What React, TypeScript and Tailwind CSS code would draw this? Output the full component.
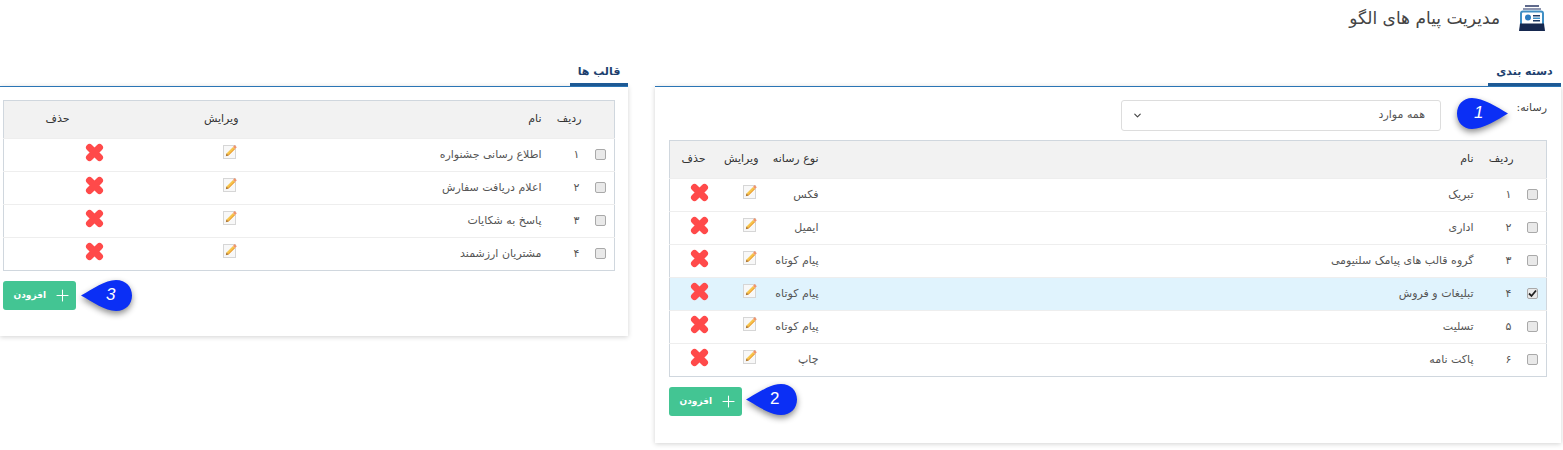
import React from "react";
import { ChevronDown, Plus } from "lucide-react";

function Check({ on }: { on?: boolean }) {
  return (
    <span className="inline-flex w-[11px] h-[11px] rounded-[2px] border border-[#a9a9a9] bg-[#e9e9e9] items-center justify-center align-middle">
      {on && (
        <svg width="9" height="9" viewBox="0 0 9 9">
          <path d="M1 4.5 L3.5 7 L8 1.5" fill="none" stroke="#222" strokeWidth="1.8" />
        </svg>
      )}
    </span>
  );
}

function Pencil() {
  return (
    <svg width="14" height="15" viewBox="0 0 14 15" className="inline-block align-middle -translate-y-[3px]">
      <rect x="0.5" y="1.5" width="12" height="13" fill="#f8f8f8" stroke="#d6d6d6" />
      <path d="M3.5 9.5 L10 3 L12 5 L5.5 11.5 L3 12 Z" fill="#f7c54a" />
      <path d="M5 11 L11.5 4.5 L12 5 L5.5 11.5 Z" fill="#e8912f" />
      <path d="M10 3 L11.5 1 L13.8 3.2 L12 5 Z" fill="#f0956b" />
      <path d="M3.5 9.5 L5.5 11.5 L2.8 12.2 Z" fill="#a8743c" />
    </svg>
  );
}

function Cross() {
  return (
    <svg width="19" height="19" viewBox="0 0 19 19" className="inline-block align-middle -translate-y-[3px]">
      <path d="M4.5 4.5 L14.5 14.5 M14.5 4.5 L4.5 14.5" stroke="#ff4a4a" strokeWidth="7" strokeLinecap="round" />
    </svg>
  );
}

function Drop({ n, dir, className, digit }: { n: string; dir: "left" | "right"; className: string; digit: string }) {
  return (
    <div className={`absolute w-[54px] h-[36px] ${className}`}>
      <svg width="54" height="36" viewBox="0 0 54 36" className="drop-shadow-[0_3px_3px_rgba(0,0,0,0.45)]">
        {dir === "right" ? (
          <path d="M16 1 C27 1 41 10 52 16.5 C41 23 27 32 16 32 C7 32 1 25 1 16.5 C1 8 7 1 16 1 Z" fill="#0b2ff5" />
        ) : (
          <path d="M36 1 C25 1 13 10 1 16.5 C13 23 25 32 36 32 C46 32 52 25 52 16.5 C52 8 46 1 36 1 Z" fill="#0b2ff5" />
        )}
      </svg>
      <span className={`absolute top-[5px] text-white text-[17px] font-['Liberation_Sans',sans-serif] leading-[22px] ${digit}`}>
        {n}
      </span>
    </div>
  );
}

function AddButton() {
  return (
    <button className="w-[73px] h-[29px] bg-[#43c593] rounded-[3px] text-white text-[9px] font-bold flex items-center justify-start pr-[4px] gap-[7px]">
      <Plus size={19} strokeWidth={1.3} />
      <span>افزودن</span>
    </button>
  );
}

function Tab({ title, w }: { title: string; w: string }) {
  return (
    <div className="h-[26px]">
      <div className={`${w} h-[26px] border-b-[3px] border-[#1f5c99] text-center text-[11px] font-bold text-[#1d3f6e] leading-[24px]`}>
        {title}
      </div>
    </div>
  );
}

const td = "border-t border-[#eeeeee] h-[33px] p-0 align-middle";
const th = "h-[38px] p-0 align-middle font-normal text-[#333] text-right";

function CategoryTable() {
  const rows = [
    ["۱", "تبریک", "فکس"],
    ["۲", "اداری", "ایمیل"],
    ["۳", "گروه قالب های پیامک سلنیومی", "پیام کوتاه"],
    ["۴", "تبلیغات و فروش", "پیام کوتاه"],
    ["۵", "تسلیت", "پیام کوتاه"],
    ["۶", "پاکت نامه", "چاپ"],
  ];
  return (
    <table className="table-fixed w-[878px] border border-[#d0d7de] border-collapse text-[11px] text-[#555]">
      <colgroup>
        <col className="w-[33px]" />
        <col className="w-[40px]" />
        <col />
        <col className="w-[60px]" />
        <col className="w-[53px]" />
        <col className="w-[36px]" />
      </colgroup>
      <thead className="bg-[#f2f2f2]">
        <tr>
          <th className={th}></th>
          <th className={th}>ردیف</th>
          <th className={th}>نام</th>
          <th className={th}>نوع رسانه</th>
          <th className={th}>ویرایش</th>
          <th className={th}>حذف</th>
        </tr>
      </thead>
      <tbody>
        {rows.map((r, i) => (
          <tr key={i} className={i === 3 ? "bg-[#e0f3fd]" : ""}>
            <td className={`${td} text-center pl-[6px]`}><Check on={i === 3} /></td>
            <td className={`${td} text-right pr-[2px]`}>{r[0]}</td>
            <td className={`${td} text-right`}>{r[1]}</td>
            <td className={`${td} text-right`}>{r[2]}</td>
            <td className={`${td} text-right pr-[2px]`}><Pencil /></td>
            <td className={`${td} text-right`}><span className="inline-block w-[19px] mr-[-3px]"><Cross /></span></td>
          </tr>
        ))}
      </tbody>
    </table>
  );
}

function TemplateTable() {
  const rows = [
    ["۱", "اطلاع رسانی جشنواره"],
    ["۲", "اعلام دریافت سفارش"],
    ["۳", "پاسخ به شکایات"],
    ["۴", "مشتریان ارزشمند"],
  ];
  return (
    <table className="table-fixed w-[612px] border border-[#d0d7de] border-collapse text-[11px] text-[#555]">
      <colgroup>
        <col className="w-[33px]" />
        <col className="w-[40px]" />
        <col />
        <col className="w-[169px]" />
        <col className="w-[66px]" />
      </colgroup>
      <thead className="bg-[#f2f2f2]">
        <tr>
          <th className={th}></th>
          <th className={th}>ردیف</th>
          <th className={th}>نام</th>
          <th className={th}>ویرایش</th>
          <th className={th}>حذف</th>
        </tr>
      </thead>
      <tbody>
        {rows.map((r, i) => (
          <tr key={i}>
            <td className={`${td} text-center pl-[5px]`}><Check /></td>
            <td className={`${td} text-right pr-[2px]`}>{r[0]}</td>
            <td className={`${td} text-right`}>{r[1]}</td>
            <td className={`${td} text-right pr-[2px]`}><Pencil /></td>
            <td className={`${td} text-right`}><span className="inline-block mr-[-34px]"><Cross /></span></td>
          </tr>
        ))}
      </tbody>
    </table>
  );
}

export default function App() {
  return (
    <div dir="rtl" className="relative w-[1563px] h-[450px] overflow-hidden bg-white font-['DejaVu_Sans',sans-serif] text-[#555]">
      <header className="flex items-center h-[60px] pb-[24px] pr-[17px]">
        <svg width="28" height="26" viewBox="0 0 28 26">
          <rect x="7" y="0" width="14" height="2" fill="#5f6a8c" />
          <rect x="5" y="3" width="18" height="2" fill="#8e96b0" />
          <path d="M3 19 V8.5 Q3 6.5 5 6.5 H23 Q25 6.5 25 8.5 V19" fill="#fff" stroke="#3f8fc4" strokeWidth="2" />
          <circle cx="10" cy="12.5" r="3" fill="#2b7cc0" />
          <rect x="15" y="10" width="7" height="1.5" fill="#1d3a66" />
          <rect x="15" y="12.5" width="7" height="1.5" fill="#3f8fc4" />
          <rect x="15" y="15" width="7" height="1.5" fill="#1d3a66" />
          <path d="M2 18.5 H26 L27 26 H1 Z" fill="#16284f" />
        </svg>
        <h1 className="mr-[18px] text-[17px] font-normal text-[#444] leading-[24px]">مدیریت پیام های الگو</h1>
      </header>

      <main className="flex gap-[27px] pr-[2px] items-start">
        <section className="w-[906px] shrink-0">
          <Tab title="دسته بندی" w="w-[73px]" />
          <div className="relative h-[357px] shadow-[0_1px_5px_rgba(0,0,0,0.18)] border-t border-[#2b75b5] pt-[13px] pr-[14px] pl-[14px] bg-white">
            <div className="flex items-start h-[40px]">
              <label className="w-[106px] text-[11px] text-[#444] leading-[16px]">رسانه:</label>
              <div className="w-[320px] h-[31px] border border-[#dddddd] rounded-[3px] flex items-center justify-between pr-[15px] pl-[10px] text-[11px] text-[#555]">
                <span>همه موارد</span>
                <ChevronDown size={11} strokeWidth={2.5} className="text-[#444]" />
              </div>
            </div>
            <CategoryTable />
            <div className="mt-[10px] flex justify-end">
              <AddButton />
            </div>
            <Drop n="1" dir="right" digit="left-[18px] italic" className="top-[10px] right-[51px]" />
            <Drop n="2" dir="left" digit="left-[25px]" className="top-[296px] left-[90px]" />
          </div>
        </section>

        <section className="w-[628px] shrink-0">
          <Tab title="قالب ها" w="w-[58px]" />
          <div className="relative h-[250px] shadow-[0_1px_5px_rgba(0,0,0,0.18)] border-t border-[#2b75b5] pt-[13px] pr-[13px] pl-[3px] bg-white">
            <TemplateTable />
            <div className="mt-[10px] flex justify-end">
              <AddButton />
            </div>
            <Drop n="3" dir="left" digit="left-[26px] italic" className="top-[192px] left-[80px]" />
          </div>
        </section>
      </main>
    </div>
  );
}
